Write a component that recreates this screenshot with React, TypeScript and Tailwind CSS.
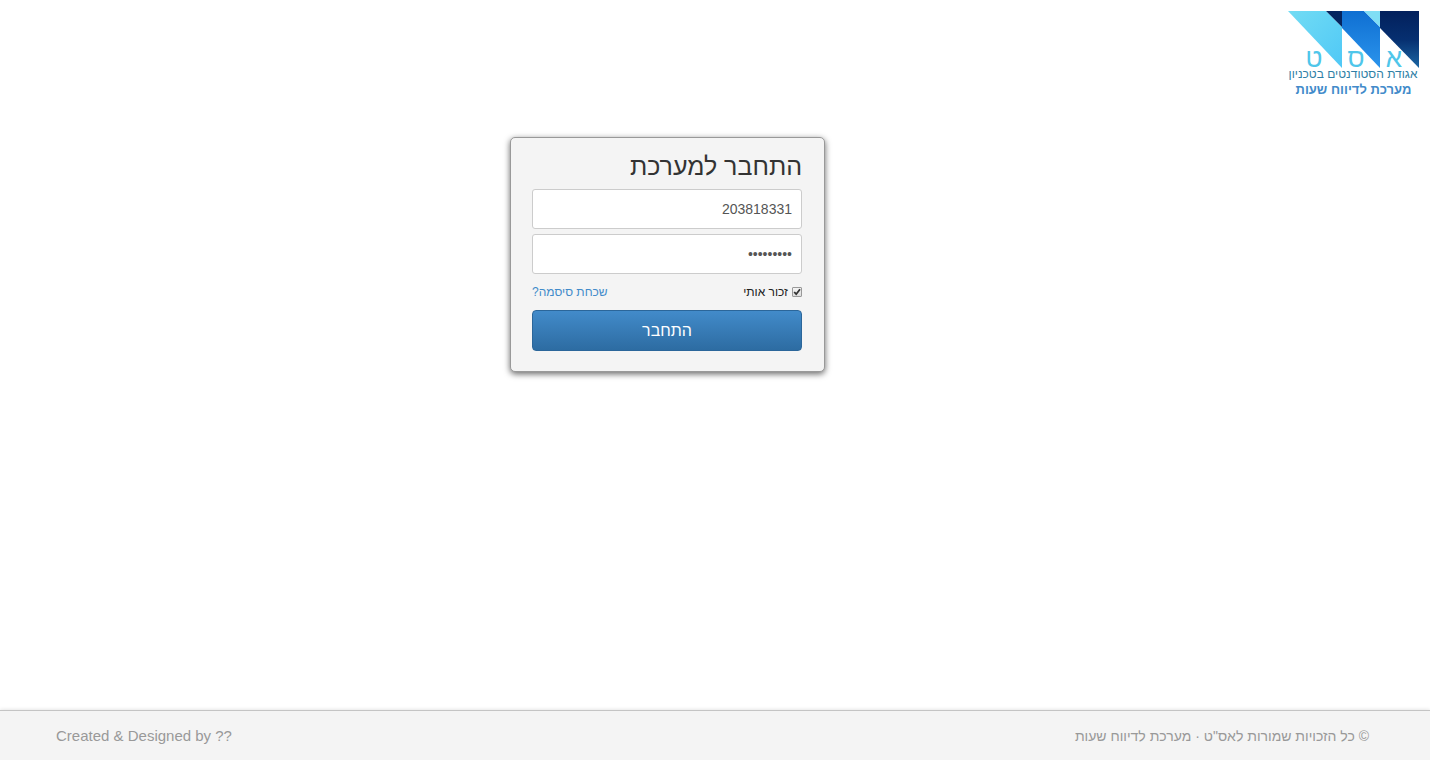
import { useState } from "react";

function Logo() {
  return (
    <div className="flex w-[131px] flex-col gap-px">
      <svg viewBox="0 0 131 70" className="block h-[70px] w-full" role="img" aria-label="אס״ט">
        <defs>
          <linearGradient id="cyan" x1="0" y1="0" x2="1" y2="1">
            <stop offset="0" stopColor="#72dcf4" />
            <stop offset="1" stopColor="#4fc8f6" />
          </linearGradient>
          <linearGradient id="blue" x1="0" y1="0" x2="0" y2="1">
            <stop offset="0" stopColor="#0f6fd2" />
            <stop offset="1" stopColor="#2b94ec" />
          </linearGradient>
          <linearGradient id="navy" x1="0" y1="0" x2="0" y2="1">
            <stop offset="0" stopColor="#02205c" />
            <stop offset="0.5" stopColor="#062f70" />
            <stop offset="1" stopColor="#1c67a4" />
          </linearGradient>
        </defs>
        <path d="M0 0H38L54 16V57Z" fill="url(#cyan)" />
        <path d="M38 0H54V16Z" fill="#04245f" />
        <path d="M54 0H76L92 16V57L54 17Z" fill="url(#blue)" />
        <path d="M76 0H92V16Z" fill="#80def5" />
        <path d="M92 0H131V57L92 17Z" fill="url(#navy)" />
        <g fontFamily="Liberation Sans, sans-serif" fontSize="26" textAnchor="middle" fill="#4fc6ea">
          <text x="26" y="56">ט</text>
          <text x="68" y="56">ס</text>
          <text x="106" y="56">א</text>
        </g>
        <text x="65" y="67" fontFamily="Liberation Sans, sans-serif" fontSize="12" textAnchor="middle" fill="#2f7fa6">
          אגודת הסטודנטים בטכניון
        </text>
      </svg>
      <p className="text-center text-[13px] leading-4 font-bold whitespace-nowrap text-[#428bca]">מערכת לדיווח שעות</p>
    </div>
  );
}

function LoginForm() {
  const [user, setUser] = useState("203818331");
  const [password, setPassword] = useState("123456789");
  const [remember, setRemember] = useState(true);
  const field =
    "block h-10 w-full rounded-[3px] border border-[#ccc] bg-white px-[9px] text-right text-sm text-[#555] outline-none focus:border-[#66afe9]";

  return (
    <form
      onSubmit={(e) => e.preventDefault()}
      className="w-full max-w-[315px] rounded-[5px] border border-[#999] bg-[#f4f4f4] pt-3 pr-[22px] pb-5 pl-[21px] shadow-[0_2px_6px_rgba(0,0,0,0.6)]"
    >
      <h1 className="mb-[7px] text-[25px] leading-8 text-[#333]">התחבר למערכת</h1>
      <div className="flex flex-col gap-[5px]">
        <input aria-label="מספר זהות" type="text" className={field} value={user} onChange={(e) => setUser(e.target.value)} />
        <input aria-label="סיסמה" type="password" className={field} value={password} onChange={(e) => setPassword(e.target.value)} />
      </div>
      <div className="flex h-9 items-center justify-between text-xs">
        <label className="flex items-center gap-1 text-[#222]">
          <span className="relative flex">
            <input
              type="checkbox"
              checked={remember}
              onChange={(e) => setRemember(e.target.checked)}
              className="peer size-[10px] appearance-none rounded-[1px] border border-[#999] bg-linear-to-b from-[#f4f4f4] to-[#ddd]"
            />
            <svg viewBox="0 0 10 10" className="pointer-events-none absolute inset-0 hidden size-[10px] peer-checked:block">
              <path d="M2.2 5L4.2 7.2L8 2.2" fill="none" stroke="#333" strokeWidth="1.8" />
            </svg>
          </span>
          זכור אותי
        </label>
        <a href="#forgot" className="text-[#428bca]">שכחת סיסמה?</a>
      </div>
      <button
        type="submit"
        className="block h-[41px] w-full rounded-[4px] border border-[#2b669a] bg-linear-to-b from-[#428bca] to-[#2d6ca2] text-base text-white"
      >
        התחבר
      </button>
    </form>
  );
}

export default function App() {
  return (
    <div dir="rtl" className="flex min-h-screen flex-col bg-white font-['Liberation_Sans',Arial,sans-serif]">
      <header className="flex px-[11px] pt-[11px]">
        <Logo />
      </header>
      <main className="flex flex-1 items-start justify-center pt-[39px] sm:pr-[95px]">
        <LoginForm />
      </main>
      <footer className="flex min-h-[50px] items-center justify-between border-t border-[#c4c4c4] bg-[#f4f4f4] pr-[61px] pl-14 text-sm text-[#999] shadow-[0_0_4px_rgba(0,0,0,0.15)]">
        <p>© כל הזכויות שמורות לאס"ט · מערכת לדיווח שעות</p>
        <p dir="ltr" className="text-[15px]">Created &amp; Designed by ??</p>
      </footer>
    </div>
  );
}
